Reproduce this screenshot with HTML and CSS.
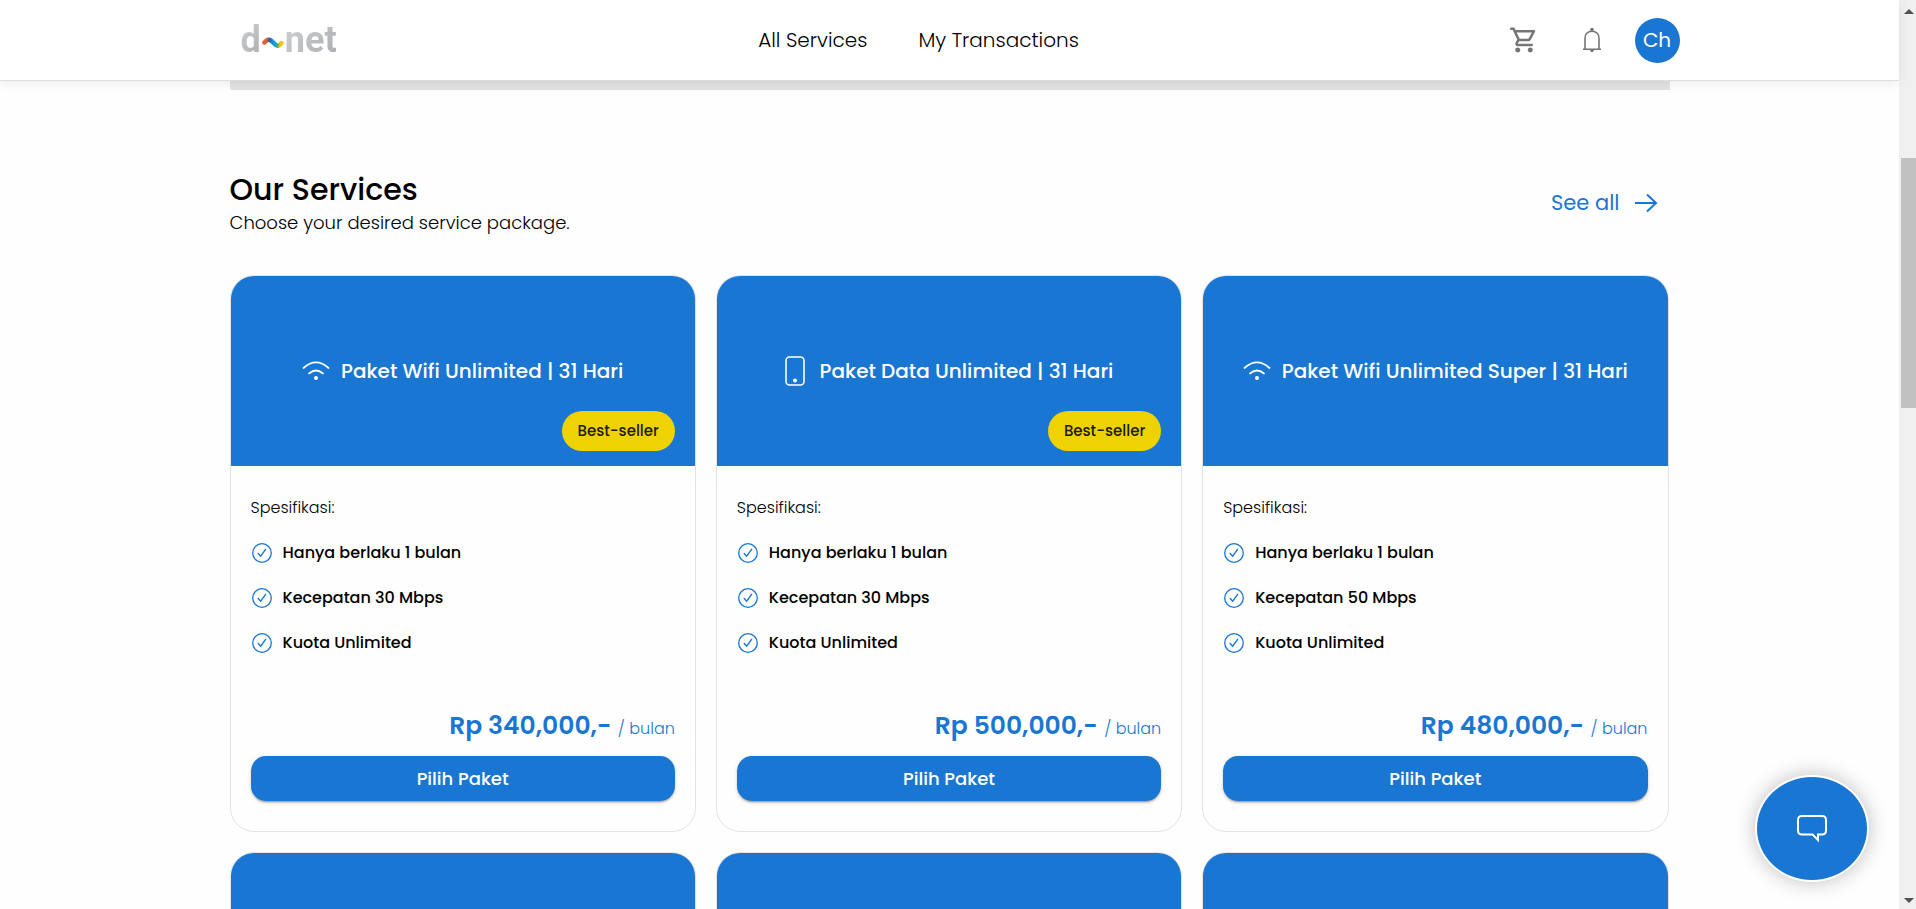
FILE: index.html
```html
<!DOCTYPE html>
<html lang="id">
<head>
<meta charset="utf-8">
<meta name="viewport" content="width=device-width, initial-scale=1">
<title>d~net</title>
<link rel="stylesheet" href="styles.css">
</head>
<body>
<svg class="sprite" aria-hidden="true">
  <symbol id="wifi" viewBox="0 0 28 20"><path d="M1.500 7Q14 -4.200 26.500 7M7 12.500Q14 6.500 21 12.500" fill="none" stroke="currentColor" stroke-width="1.700" stroke-linecap="round"/><circle cx="14" cy="17" r="2" fill="currentColor"/></symbol>
  <symbol id="phone" viewBox="0 0 20 30"><rect x="1" y="1" width="18" height="28" rx="3.500" fill="none" stroke="currentColor" stroke-width="1.600"/><circle cx="10" cy="24.500" r="2" fill="currentColor"/></symbol>
  <symbol id="check" viewBox="0 0 20 20"><circle cx="10" cy="10" r="9.300" fill="none" stroke="currentColor" stroke-width="1.300"/><path d="M6.200 10.600L8.700 13.200L13.600 6.300" fill="none" stroke="currentColor" stroke-width="1.400" stroke-linecap="round" stroke-linejoin="round"/></symbol>
</svg>
<div class="page">
  <header class="topbar">
    <div class="topbar-inner">
      <a class="logo" href="#" aria-label="d~net"><span>d</span><svg class="wave" viewBox="0 0 22 14"><defs><linearGradient id="rainbow" x1="0" x2="22" y1="0" y2="0" gradientUnits="userSpaceOnUse"><stop offset=".2" stop-color="#f05a28"/><stop offset=".34" stop-color="#2e62ad"/><stop offset=".55" stop-color="#00a4ec"/><stop offset=".7" stop-color="#41a67a"/><stop offset=".82" stop-color="#fdc60b"/></linearGradient></defs><path d="M2.500 6.500C6 1.500 9 4 11.500 6.800S16.500 11.500 19.500 7" fill="none" stroke="url(#rainbow)" stroke-width="4.500" stroke-linecap="round"/></svg><span>net</span></a>
      <nav class="nav"><a href="#">All Services</a><a href="#">My Transactions</a></nav>
      <div class="actions">
        <button class="icon-button" aria-label="Cart"><svg width="30" height="30" viewBox="0 0 24 24"><path fill="currentColor" d="M15.550 13c.75 0 1.410-.41 1.750-1.030l3.580-6.490c.37-.66-.11-1.480-.87-1.480H5.210l-.94-2H1v2h2l3.600 7.590-1.350 2.440C4.520 15.370 5.480 17 7 17h12v-2H7l1.100-2h7.450zM6.160 6h12.150l-2.760 5H8.530L6.160 6zM7 18c-1.100 0-1.990.9-1.990 2S5.900 22 7 22s2-.9 2-2-.9-2-2-2zm10 0c-1.100 0-1.990.9-1.990 2s.89 2 1.990 2 2-.9 2-2-.9-2-2-2z"/></svg></button>
        <button class="icon-button" aria-label="Notifications"><svg width="20" height="26" viewBox="0 0 20 26"><g fill="none" stroke="currentColor" stroke-width="1.600"><path d="M1 22.200H19M3 22V11.500C3 6.700 6 4.200 10 4.200S17 6.700 17 11.500V22"/></g><circle cx="10" cy="2.600" r="1.800" fill="currentColor"/><path d="M8.300 22H11.700V23.500A1.700 1.700 0 0 1 8.300 23.500Z" fill="currentColor"/></svg></button>
        <button class="avatar">Ch</button>
      </div>
    </div>
  </header>
  <main class="content">
    <div class="banner-edge"></div>
    <section class="services">
      <div class="section-head">
        <div><h1>Our Services</h1><p>Choose your desired service package.</p></div>
        <a class="see-all" href="#">See all <svg width="24" height="20" viewBox="0 0 24 20"><path d="M1 10H22M13 1.500L22 10L13 18.500" fill="none" stroke="currentColor" stroke-width="2"/></svg></a>
      </div>
      <div class="grid">
        <article class="card">
          <div class="card-top"><h2><svg class="wifi"><use href="#wifi"/></svg>Paket Wifi Unlimited | 31 Hari</h2><span class="badge">Best-seller</span></div>
          <div class="card-body">
            <p class="label">Spesifikasi:</p>
            <ul class="specs">
              <li><svg><use href="#check"/></svg>Hanya berlaku 1 bulan</li>
              <li><svg><use href="#check"/></svg>Kecepatan 30 Mbps</li>
              <li><svg><use href="#check"/></svg>Kuota Unlimited</li>
            </ul>
            <p class="price"><strong>Rp 340,000,-</strong> <span>/ bulan</span></p>
            <button class="choose">Pilih Paket</button>
          </div>
        </article>
        <article class="card">
          <div class="card-top"><h2><svg class="phone"><use href="#phone"/></svg>Paket Data Unlimited | 31 Hari</h2><span class="badge">Best-seller</span></div>
          <div class="card-body">
            <p class="label">Spesifikasi:</p>
            <ul class="specs">
              <li><svg><use href="#check"/></svg>Hanya berlaku 1 bulan</li>
              <li><svg><use href="#check"/></svg>Kecepatan 30 Mbps</li>
              <li><svg><use href="#check"/></svg>Kuota Unlimited</li>
            </ul>
            <p class="price"><strong>Rp 500,000,-</strong> <span>/ bulan</span></p>
            <button class="choose">Pilih Paket</button>
          </div>
        </article>
        <article class="card">
          <div class="card-top"><h2><svg class="wifi"><use href="#wifi"/></svg>Paket Wifi Unlimited Super | 31 Hari</h2></div>
          <div class="card-body">
            <p class="label">Spesifikasi:</p>
            <ul class="specs">
              <li><svg><use href="#check"/></svg>Hanya berlaku 1 bulan</li>
              <li><svg><use href="#check"/></svg>Kecepatan 50 Mbps</li>
              <li><svg><use href="#check"/></svg>Kuota Unlimited</li>
            </ul>
            <p class="price"><strong>Rp 480,000,-</strong> <span>/ bulan</span></p>
            <button class="choose">Pilih Paket</button>
          </div>
        </article>
        <article class="card"><div class="card-top"></div></article>
        <article class="card"><div class="card-top"></div></article>
        <article class="card"><div class="card-top"></div></article>
      </div>
    </section>
  </main>
</div>
<div class="scrollbar" aria-hidden="true"><i class="arrow up"></i><div class="track"><div class="thumb"></div></div><i class="arrow down"></i></div>
<button class="chat" aria-label="Chat"><svg width="30" height="28" viewBox="0 0 30 28"><path d="M5 1H25Q29 1 29 5V15.500Q29 19.500 25 19.500H21V25L15.500 19.500H5Q1 19.500 1 15.500V5Q1 1 5 1Z" fill="none" stroke="currentColor" stroke-width="2"/></svg></button>
</body>
</html>
```
FILE: styles.css
```css
:root {
  --blue: #1976d2;
  --line: #e3e3e5;
}

* { box-sizing: border-box; }

body {
  margin: 0;
  height: 100vh;
  display: flex;
  overflow: hidden;
  background: #fefefe;
  color: #000;
  font-family: Poppins, Inter, "Open Sans", sans-serif;
}

h1, h2, p, ul { margin: 0; padding: 0; }
a { color: inherit; text-decoration: none; }
button { border: 0; padding: 0; font-family: inherit; cursor: pointer; }
svg { flex: none; }

.sprite { position: absolute; width: 0; height: 0; }

.page {
  flex: 1;
  min-width: 0;
  display: flex;
  flex-direction: column;
}

.topbar {
  flex: none;
  z-index: 1;
  background: #fff;
  border-bottom: 1px solid #dedede;
  box-shadow: 0 2px 10px rgba(0, 0, 0, .08);
}

.topbar-inner {
  max-width: 1536px;
  height: 80px;
  margin: 0 auto;
  padding: 0 38px 0 59px;
  display: flex;
  align-items: center;
  justify-content: space-between;
}

.logo {
  display: flex;
  align-items: center;
  font: 700 36px/42px Roboto, sans-serif;
}

.logo span {
  background: linear-gradient(135deg, #d0d2d3, #a9abae);
  background-clip: text;
  -webkit-background-clip: text;
  color: transparent;
}

.wave { width: 22px; height: 14px; margin: 6px 1px 0; }

.nav { display: flex; gap: 51px; font-size: 20px; font-weight: 300; }

.actions { display: flex; align-items: center; padding-left: 8px; color: #757575; }
.icon-button { background: none; color: inherit; display: flex; margin-right: 43px; }
.icon-button + .icon-button { margin-right: 33px; }

.avatar {
  width: 45px;
  height: 45px;
  border-radius: 50%;
  background: var(--blue);
  color: #fff;
  font-size: 20px;
}

.content {
  width: 100%;
  max-width: 1536px;
  margin: 0 auto;
  padding: 0 48px;
  flex: 1;
  min-height: 0;
  overflow: hidden;
}

.banner-edge { height: 9px; background: #e2e2e2; }

.services { padding-top: 80px; }

.section-head {
  display: flex;
  justify-content: space-between;
  align-items: center;
  padding-right: 12px;
  margin-bottom: 40px;
}

.section-head h1 { font-size: 30px; line-height: 40px; font-weight: 500; }
.section-head p { font-size: 18px; line-height: 25px; font-weight: 300; }

.see-all {
  display: flex;
  align-items: center;
  gap: 14px;
  color: var(--blue);
  font-size: 21px;
}

.grid {
  display: grid;
  grid-template-columns: repeat(3, 1fr);
  gap: 20px;
  padding-right: 1px;
}

.card {
  border: 1px solid var(--line);
  border-radius: 24px;
  overflow: hidden;
}

.card-top {
  position: relative;
  height: 190px;
  display: flex;
  align-items: center;
  justify-content: center;
  background: var(--blue);
  color: #fff;
}

.card-top h2 {
  display: flex;
  align-items: center;
  gap: 11px;
  font-size: 20px;
  line-height: 30px;
  font-weight: 500;
}

.wifi { width: 28px; height: 20px; }
.phone { width: 20px; height: 30px; margin-right: 4px; }

.badge {
  position: absolute;
  right: 20px;
  bottom: 15px;
  padding: 0 16px;
  border-radius: 20px;
  background: #eed202;
  color: #1d1c05;
  font-size: 15px;
  line-height: 40px;
  font-weight: 500;
}

.card-body { padding: 30px 20px; }

.label { font-size: 16px; line-height: 24px; font-weight: 300; }

.specs {
  list-style: none;
  padding-top: 10px;
  font-size: 16px;
  line-height: 45px;
  font-weight: 500;
}

.specs li { display: flex; align-items: center; gap: 11px; padding-left: 1px; }
.specs svg { width: 20px; height: 20px; color: var(--blue); }

.price {
  padding: 41px 0 7px;
  color: var(--blue);
  text-align: right;
  font-size: 16px;
  line-height: 40px;
  font-weight: 300;
}

.price strong { font-size: 25px; font-weight: 600; margin-right: 2px; }

.choose {
  display: block;
  width: 100%;
  height: 45px;
  border-radius: 15px;
  background: var(--blue);
  color: #fff;
  font-size: 18px;
  font-weight: 500;
  box-shadow: 0 3px 1px -2px rgba(0, 0, 0, .2), 0 2px 2px rgba(0, 0, 0, .14), 0 1px 5px rgba(0, 0, 0, .12);
}

.scrollbar {
  width: 17px;
  display: flex;
  flex-direction: column;
  align-items: center;
  padding: 9px 0 6px 2px;
  background: #f0f0f0;
}

.arrow { border: 5px solid transparent; }
.up { border-top: 0; border-bottom-color: #505050; }
.down { border-bottom: 0; border-top-color: #505050; }

.track { flex: 1; width: 15px; padding-top: 144px; }
.thumb { height: 250px; background: #c1c1c1; }

.chat {
  position: fixed;
  right: 47px;
  bottom: 27px;
  width: 114px;
  height: 107px;
  display: flex;
  align-items: center;
  justify-content: center;
  border: 2px solid #fff;
  border-radius: 50%;
  background: var(--blue);
  color: #fff;
  box-shadow: 0 0 20px rgba(0, 0, 0, .25);
}
```
